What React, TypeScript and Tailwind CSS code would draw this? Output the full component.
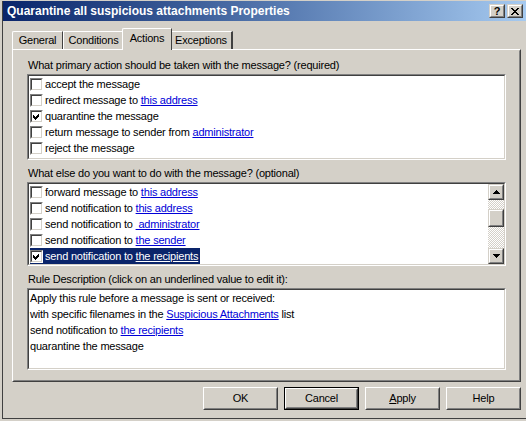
import React from "react";

const Check = ({ checked }: { checked?: boolean }) => (
  <span className="block w-[13px] h-[13px] shrink-0 border border-t-[#808080] border-l-[#808080] border-r-white border-b-white">
    <span className="flex w-full h-full items-center justify-center bg-white border border-t-[#404040] border-l-[#404040] border-r-[#d4d0c8] border-b-[#d4d0c8]">
      {checked && (
        <svg width="9" height="9" viewBox="0 0 9 9" shapeRendering="crispEdges">
          <polygon points="1,3 3,5 7,1 7,4 3,8 1,6" fill="#000" />
        </svg>
      )}
    </span>
  </span>
);

const Link = ({ children, white }: { children: React.ReactNode; white?: boolean }) => (
  <span className={white ? "underline text-white" : "underline text-[#0000d8]"}>{children}</span>
);

const Row = ({
  checked,
  text,
  link,
  selected,
}: {
  checked?: boolean;
  text: string;
  link?: string;
  selected?: boolean;
}) => (
  <div className="h-[16px] flex items-center pl-[1px]">
    <div className={selected ? "flex items-center h-[16px] bg-[#0a246a] text-white pr-[2px]" : "flex items-center h-[16px]"}>
      <Check checked={checked} />
      <span className="ml-[2px] whitespace-pre">
        {text}
        {link && <Link white={selected}>{link}</Link>}
      </span>
    </div>
  </div>
);

const Sunken = ({ className, children }: { className: string; children: React.ReactNode }) => (
  <div className={"border border-t-[#808080] border-l-[#808080] border-r-white border-b-white " + className}>
    <div className="w-full h-full bg-white border border-t-[#404040] border-l-[#404040] border-r-[#d4d0c8] border-b-[#d4d0c8] overflow-hidden">
      {children}
    </div>
  </div>
);

const Raised = ({ className, children }: { className: string; children?: React.ReactNode }) => (
  <div className={"border border-t-[#d4d0c8] border-l-[#d4d0c8] border-r-[#404040] border-b-[#404040] " + className}>
    <div className="w-full h-full flex items-center justify-center bg-[#d4d0c8] border border-t-white border-l-white border-r-[#808080] border-b-[#808080]">
      {children}
    </div>
  </div>
);

const Btn = ({ children, def }: { children: React.ReactNode; def?: boolean }) =>
  def ? (
    <div className="w-[75px] h-[23px] border border-black">
      <div className="w-full h-full border border-t-white border-l-white border-r-[#404040] border-b-[#404040]">
        <div className="w-full h-full flex items-center justify-center border border-t-[#d4d0c8] border-l-[#d4d0c8] border-r-[#808080] border-b-[#808080]">
          {children}
        </div>
      </div>
    </div>
  ) : (
    <div className="w-[75px] h-[23px] border border-t-white border-l-white border-r-[#404040] border-b-[#404040]">
      <div className="w-full h-full flex items-center justify-center border border-t-[#d4d0c8] border-l-[#d4d0c8] border-r-[#808080] border-b-[#808080]">
        {children}
      </div>
    </div>
  );

const Arrow = ({ up }: { up?: boolean }) => (
  <svg width="7" height="4" viewBox="0 0 7 4" shapeRendering="crispEdges">
    <polygon points={up ? "3.5,0 7,4 0,4" : "0,0 7,0 3.5,4"} fill="#000" />
  </svg>
);

export default function App() {
  return (
    <div className="w-[526px] h-[421px] bg-[#d4d0c8] pt-[1px] pb-[2px] pl-[2px] overflow-hidden text-[11px] tracking-[-0.2px] text-black font-['Liberation_Sans',Arial,sans-serif]">
      <div className="h-full flex flex-col border-l border-b border-[#404040]">
        {/* Title bar */}
        <div className="h-[20px] flex items-center pl-[4px] pr-[3px] bg-linear-to-r from-[#0a246a] to-[#a6caf0]">
          <span className="flex-1 text-white font-bold text-[12px] tracking-normal">
            Quarantine all suspicious attachments Properties
          </span>
          <Raised className="w-[16px] h-[14px]">
            <span className="font-bold text-[11px] leading-none tracking-normal">?</span>
          </Raised>
          <Raised className="w-[16px] h-[14px] ml-[2px]">
            <svg width="8" height="7" viewBox="0 0 8 7" shapeRendering="crispEdges">
              <path d="M0 0h2l2 2.5L6 0h2L5 3.5 8 7H6L4 4.5 2 7H0l3-3.5z" fill="#000" />
            </svg>
          </Raised>
        </div>

        <div className="flex-1 flex flex-col pl-[9px] pr-[5px] pt-[7px]">
          {/* Tabs */}
          <div className="h-[21px] flex items-end">
            <div className="w-[51px] h-[18px] flex items-center justify-center border-t border-l border-white border-r border-r-[#404040] rounded-tl-[2px]">
              General
            </div>
            <div className="w-[61px] h-[18px] flex items-center justify-center border-t border-l border-white border-r border-r-[#404040]">
              Conditions
            </div>
            <div className="relative z-10 w-[50px] h-[22px] -mx-[2px] -mb-[1px] pb-[2px] flex items-center justify-center bg-[#d4d0c8] border-t border-l border-white border-r border-r-[#404040] rounded-tl-[2px]">
              Actions
            </div>
            <div className="w-[63px] h-[18px] flex items-center justify-center border-t border-l border-white border-r-2 border-r-[#404040]">
              Exceptions
            </div>
          </div>

          {/* Panel */}
          <div className="h-[333px] border border-t-white border-l-white border-r-[#404040] border-b-[#404040]">
            <div className="w-full h-full border border-t-[#d4d0c8] border-l-[#d4d0c8] border-r-[#808080] border-b-[#808080] px-[13px] pt-[7px] flex flex-col">
              <div className="leading-[14px] pl-[1px]">
                What primary action should be taken with the message? (required)
              </div>
              <Sunken className="mt-[2px] h-[86px]">
                <Row text="accept the message" />
                <Row text="redirect message to " link="this address" />
                <Row text="quarantine the message" checked />
                <Row text="return message to sender from " link="administrator" />
                <Row text="reject the message" />
              </Sunken>

              <div className="mt-[6px] leading-[14px] pl-[1px]">
                What else do you want to do with the message? (optional)
              </div>
              <Sunken className="mt-[2px] h-[84px]">
                <div className="flex h-full">
                  <div className="flex-1">
                    <Row text="forward message to " link="this address" />
                    <Row text="send notification to " link="this address" />
                    <Row text="send notification to " link={"\u00a0administrator"} />
                    <Row text="send notification to " link="the sender" />
                    <Row text="send notification to " link="the recipients" checked selected />
                  </div>
                  <div className="w-[16px] h-full flex flex-col">
                    <Raised className="w-[16px] h-[16px] shrink-0">
                      <Arrow up />
                    </Raised>
                    <div className="flex-1 pt-[9px] bg-[repeating-conic-gradient(#d4d0c8_0_25%,#ffffff_0_50%)] bg-[length:2px_2px]">
                      <Raised className="w-[16px] h-[18px]" />
                    </div>
                    <Raised className="w-[16px] h-[16px] shrink-0">
                      <Arrow />
                    </Raised>
                  </div>
                </div>
              </Sunken>

              <div className="mt-[6px] leading-[14px] pl-[1px]">
                Rule Description (click on an underlined value to edit it):
              </div>
              <Sunken className="mt-[2px] h-[82px]">
                <div className="pl-[1px] leading-[16px]">
                  <div>Apply this rule before a message is sent or received:</div>
                  <div>
                    with specific filenames in the <Link>Suspicious Attachments</Link> list
                  </div>
                  <div>
                    send notification to <Link>the recipients</Link>
                  </div>
                  <div>quarantine the message</div>
                </div>
              </Sunken>
            </div>
          </div>

          {/* Buttons */}
          <div className="mt-[5px] flex justify-end gap-[6px]">
            <Btn>OK</Btn>
            <Btn def>Cancel</Btn>
            <Btn>
              <span>
                <span className="underline">A</span>pply
              </span>
            </Btn>
            <Btn>Help</Btn>
          </div>
        </div>
      </div>
    </div>
  );
}
